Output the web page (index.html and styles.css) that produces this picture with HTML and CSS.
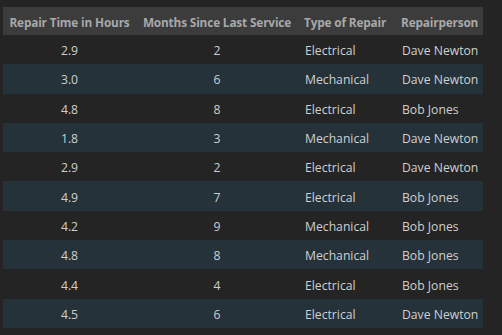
FILE: index.html
```html
<!DOCTYPE html>
<html>
<head>
<meta charset="utf-8">
<link rel="stylesheet" href="styles.css">
</head>
<body>
<table class="data">
  <colgroup>
    <col class="c1"><col class="c2"><col class="c3"><col class="c4">
  </colgroup>
  <thead>
    <tr><th class="center">Repair Time in Hours</th><th class="center">Months Since Last Service</th><th>Type of Repair</th><th>Repairperson</th></tr>
  </thead>
  <tbody>
    <tr><td class="center">2.9</td><td class="center">2</td><td>Electrical</td><td>Dave Newton</td></tr>
    <tr><td class="center">3.0</td><td class="center">6</td><td>Mechanical</td><td>Dave Newton</td></tr>
    <tr><td class="center">4.8</td><td class="center">8</td><td>Electrical</td><td>Bob Jones</td></tr>
    <tr><td class="center">1.8</td><td class="center">3</td><td>Mechanical</td><td>Dave Newton</td></tr>
    <tr><td class="center">2.9</td><td class="center">2</td><td>Electrical</td><td>Dave Newton</td></tr>
    <tr><td class="center">4.9</td><td class="center">7</td><td>Electrical</td><td>Bob Jones</td></tr>
    <tr><td class="center">4.2</td><td class="center">9</td><td>Mechanical</td><td>Bob Jones</td></tr>
    <tr><td class="center">4.8</td><td class="center">8</td><td>Mechanical</td><td>Bob Jones</td></tr>
    <tr><td class="center">4.4</td><td class="center">4</td><td>Electrical</td><td>Bob Jones</td></tr>
    <tr><td class="center">4.5</td><td class="center">6</td><td>Electrical</td><td>Dave Newton</td></tr>
  </tbody>
</table>
</body>
</html>
```

FILE: styles.css
```css
html, body {
  margin: 0;
  background: #242424;
}
body {
  padding: 7px 0 0 3px;
  font-family: "Open Sans", "Noto Sans", sans-serif;
}
.data {
  border-collapse: collapse;
  table-layout: fixed;
  width: 480px;
}
.c1 { width: 133px; }
.c2 { width: 162px; }
.c3 { width: 97px; }
.c4 { width: 88px; }
.data th {
  background: #3c3c3c;
  color: #a8a8a8;
  font-weight: 700;
  font-size: 11.8px;
  height: 26px;
  padding: 2px 6px 0;
  text-align: left;
  white-space: nowrap;
  letter-spacing: -0.15px;
}
.data td {
  color: #cfcfcf;
  font-size: 12.2px;
  height: 27.3px;
  padding: 2px 7px 0;
  text-align: left;
  white-space: nowrap;
}
.data th.center, .data td.center { text-align: center; }
.data tbody tr:nth-child(even) td { background: #25323a; }
```
